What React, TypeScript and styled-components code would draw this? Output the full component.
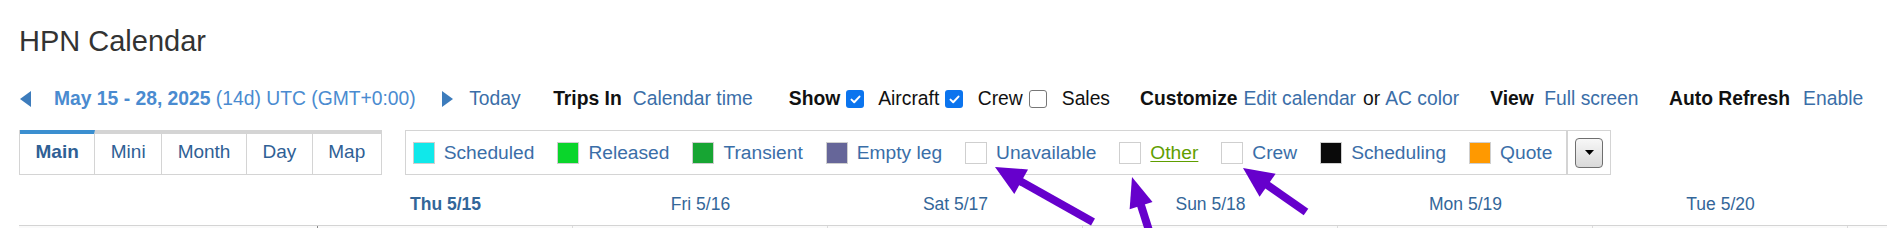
import React from "react";
import styled, { createGlobalStyle } from "styled-components";

const Global = createGlobalStyle`
  html, body { margin: 0; padding: 0; background: #fff; overflow: hidden; }
  body { font-family: "Liberation Sans", Arial, Helvetica, sans-serif; }
`;

const Page = styled.div`
  position: relative;
  width: 1887px;
  height: 228px;
  overflow: hidden;
  padding-left: 19px;
  box-sizing: border-box;
`;

const Title = styled.h1`
  margin: 24px 0 0;
  font-size: 29px;
  font-weight: normal;
  line-height: 34px;
  color: #333;
`;

const Toolbar = styled.div`
  display: flex;
  align-items: center;
  height: 24px;
  margin-top: 29px;
  font-size: 19.3px;
  line-height: 24px;
  white-space: nowrap;
`;

const NavArrow = styled.svg<{ $gap?: number }>`
  flex: none;
  width: 11px;
  height: 16px;
  margin-left: ${(p) => p.$gap ?? 0}px;
`;

const DateLink = styled.span<{ $gap?: number }>`
  margin-left: ${(p) => p.$gap ?? 0}px;
  color: #4a8bd0;
  b { font-weight: bold; }
`;

const Link = styled.span<{ $gap?: number }>`
  margin-left: ${(p) => p.$gap ?? 0}px;
  color: #3a6ea8;
`;

const Label = styled.span<{ $gap?: number; $bold?: boolean }>`
  margin-left: ${(p) => p.$gap ?? 0}px;
  color: #111;
  font-weight: ${(p) => (p.$bold ? "bold" : "normal")};
`;

const Check = styled.span<{ $on?: boolean; $gap?: number }>`
  flex: none;
  box-sizing: border-box;
  width: 18px;
  height: 18px;
  margin-left: ${(p) => p.$gap ?? 0}px;
  border-radius: 3px;
  display: inline-flex;
  align-items: center;
  justify-content: center;
  background: ${(p) => (p.$on ? "#0b74ee" : "#fff")};
  border: ${(p) => (p.$on ? "none" : "1.5px solid #777")};
`;

const SubRow = styled.div`
  display: flex;
  align-items: flex-start;
  margin-top: 19px;
`;

const Tabs = styled.div`
  display: flex;
  border-left: 1px solid #d4d4d4;
`;

const Tab = styled.div<{ $active?: boolean }>`
  height: 45px;
  box-sizing: border-box;
  padding: 0 15.5px 2px;
  border-top: 4px solid ${(p) => (p.$active ? "#3b8fd0" : "#d4d4d4")};
  border-right: 1px solid #d4d4d4;
  border-bottom: 1px solid #d4d4d4;
  font-size: 19px;
  line-height: 35px;
  color: #2f6095;
  font-weight: ${(p) => (p.$active ? "bold" : "normal")};
`;

const Legend = styled.div`
  display: flex;
  align-items: center;
  height: 45px;
  box-sizing: border-box;
  margin-left: 23px;
  padding: 0 14px 0 7px;
  border: 1px solid #d4d4d4;
  font-size: 19.2px;
  white-space: nowrap;
`;

const LegendItem = styled.div`
  display: flex;
  align-items: center;
  & + & { margin-left: 23px; }
`;

const Swatch = styled.span<{ $color: string }>`
  width: 22px;
  height: 22px;
  box-sizing: border-box;
  border: 1px solid #cfcfcf;
  background: ${(p) => p.$color};
`;

const LegendText = styled.span<{ $other?: boolean }>`
  margin-left: 9px;
  color: ${(p) => (p.$other ? "#5f9e00" : "#3a6ea8")};
  text-decoration: ${(p) => (p.$other ? "underline" : "none")};
  text-underline-offset: 2px;
`;

const DropBox = styled.div`
  width: 44px;
  height: 45px;
  box-sizing: border-box;
  border: 1px solid #d4d4d4;
  display: flex;
  align-items: center;
  justify-content: center;
`;

const DropButton = styled.div`
  width: 28px;
  height: 30px;
  box-sizing: border-box;
  border: 1px solid #6f6f6f;
  border-radius: 4px;
  background: linear-gradient(#f7f7f7, #d9d9d9);
  display: flex;
  align-items: center;
  justify-content: center;
`;

const DayHeader = styled.div`
  display: flex;
  margin-top: 18px;
  height: 22px;
  font-size: 17.5px;
  line-height: 22px;
  white-space: nowrap;
`;

const ResourceHead = styled.div`
  flex: none;
  width: 299px;
`;

const DayName = styled.div<{ $today?: boolean }>`
  flex: none;
  width: 255px;
  text-align: center;
  color: #336699;
  font-weight: ${(p) => (p.$today ? "bold" : "normal")};
`;

const Grid = styled.div`
  display: flex;
  margin-top: 10px;
  height: 20px;
  border-top: 1px solid #d4d4d4;
  background: #fafafa;
`;

const ResourceCell = styled.div`
  flex: none;
  width: 298px;
  border-right: 1px solid #888;
`;

const DayCell = styled.div`
  flex: none;
  width: 254px;
  border-right: 1px solid #dcdcdc;
`;

const Overlay = styled.svg`
  position: absolute;
  left: 0;
  top: 0;
  width: 1887px;
  height: 228px;
  pointer-events: none;
`;

type Pt = [number, number];

function Arrow({ tip, tail, head = 30, half = 14, width = 8 }: { tip: Pt; tail: Pt; head?: number; half?: number; width?: number }) {
  const dx = tail[0] - tip[0];
  const dy = tail[1] - tip[1];
  const len = Math.hypot(dx, dy);
  const ux = dx / len;
  const uy = dy / len;
  const bx = tip[0] + ux * head;
  const by = tip[1] + uy * head;
  const px = -uy;
  const py = ux;
  const pts = `${tip[0]},${tip[1]} ${bx + px * half},${by + py * half} ${bx - px * half},${by - py * half}`;
  return (
    <g fill="#6600cc" stroke="#6600cc">
      <line x1={bx - ux * 3} y1={by - uy * 3} x2={tail[0]} y2={tail[1]} strokeWidth={width} />
      <polygon points={pts} strokeWidth={0} />
    </g>
  );
}

const legend: { label: string; color?: string; other?: boolean }[] = [
  { label: "Scheduled", color: "#10e8ea" },
  { label: "Released", color: "#0ad52b" },
  { label: "Transient", color: "#17a533" },
  { label: "Empty leg", color: "#666699" },
  { label: "Unavailable" },
  { label: "Other", other: true },
  { label: "Crew" },
  { label: "Scheduling", color: "#0a0a0a" },
  { label: "Quote", color: "#ff9900" },
];

const days = ["Thu 5/15", "Fri 5/16", "Sat 5/17", "Sun 5/18", "Mon 5/19", "Tue 5/20"];

const Tick = () => (
  <svg width="11" height="9" viewBox="0 0 11 9">
    <path d="M1.5 4.6 L4.2 7.2 L9.5 1.6" fill="none" stroke="#fff" strokeWidth="2" strokeLinecap="round" strokeLinejoin="round" />
  </svg>
);

export default function App() {
  return (
    <>
      <Global />
      <Page>
        <Title>HPN Calendar</Title>
        <Toolbar>
          <NavArrow $gap={1} viewBox="0 0 11 16">
            <polygon points="11,0 11,16 0,8" fill="#3d7cbc" />
          </NavArrow>
          <DateLink $gap={23}>
            <b>May 15 - 28, 2025</b> (14d) UTC (GMT+0:00)
          </DateLink>
          <NavArrow $gap={26.5} viewBox="0 0 11 16">
            <polygon points="0,0 0,16 11,8" fill="#3d7cbc" />
          </NavArrow>
          <Link $gap={16}>Today</Link>
          <Label $gap={32.5} $bold>Trips In</Label>
          <Link $gap={11}>Calendar time</Link>
          <Label $gap={36} $bold>Show</Label>
          <Check $on $gap={6}><Tick /></Check>
          <Label $gap={14}>Aircraft</Label>
          <Check $on $gap={6}><Tick /></Check>
          <Label $gap={14.5}>Crew</Label>
          <Check $gap={6} />
          <Label $gap={15}>Sales</Label>
          <Label $gap={30} $bold>Customize</Label>
          <Link $gap={6}>Edit calendar</Link>
          <Label $gap={7}>or</Label>
          <Link $gap={5}>AC color</Link>
          <Label $gap={31} $bold>View</Label>
          <Link $gap={10.5}>Full screen</Link>
          <Label $gap={30.5} $bold>Auto Refresh</Label>
          <Link $gap={13}>Enable</Link>
        </Toolbar>
        <SubRow>
          <Tabs>
            <Tab $active>Main</Tab>
            <Tab>Mini</Tab>
            <Tab>Month</Tab>
            <Tab>Day</Tab>
            <Tab>Map</Tab>
          </Tabs>
          <Legend>
            {legend.map((l) => (
              <LegendItem key={l.label}>
                <Swatch $color={l.color ?? "#fff"} />
                <LegendText $other={l.other}>{l.label}</LegendText>
              </LegendItem>
            ))}
          </Legend>
          <DropBox>
            <DropButton>
              <svg width="9" height="5" viewBox="0 0 9 5">
                <polygon points="0,0 9,0 4.5,5" fill="#000" />
              </svg>
            </DropButton>
          </DropBox>
        </SubRow>
        <DayHeader>
          <ResourceHead />
          {days.map((d, i) => (
            <DayName key={d} $today={i === 0}>{d}</DayName>
          ))}
        </DayHeader>
        <Grid>
          <ResourceCell />
          {days.map((d) => (
            <DayCell key={d} />
          ))}
          <DayCell />
        </Grid>
        <Overlay viewBox="0 0 1887 228">
          <Arrow tip={[995, 167]} tail={[1093, 222]} />
          <Arrow tip={[1132, 177]} tail={[1152, 240]} half={12} />
          <Arrow tip={[1243, 168]} tail={[1306, 212]} />
        </Overlay>
      </Page>
    </>
  );
}
